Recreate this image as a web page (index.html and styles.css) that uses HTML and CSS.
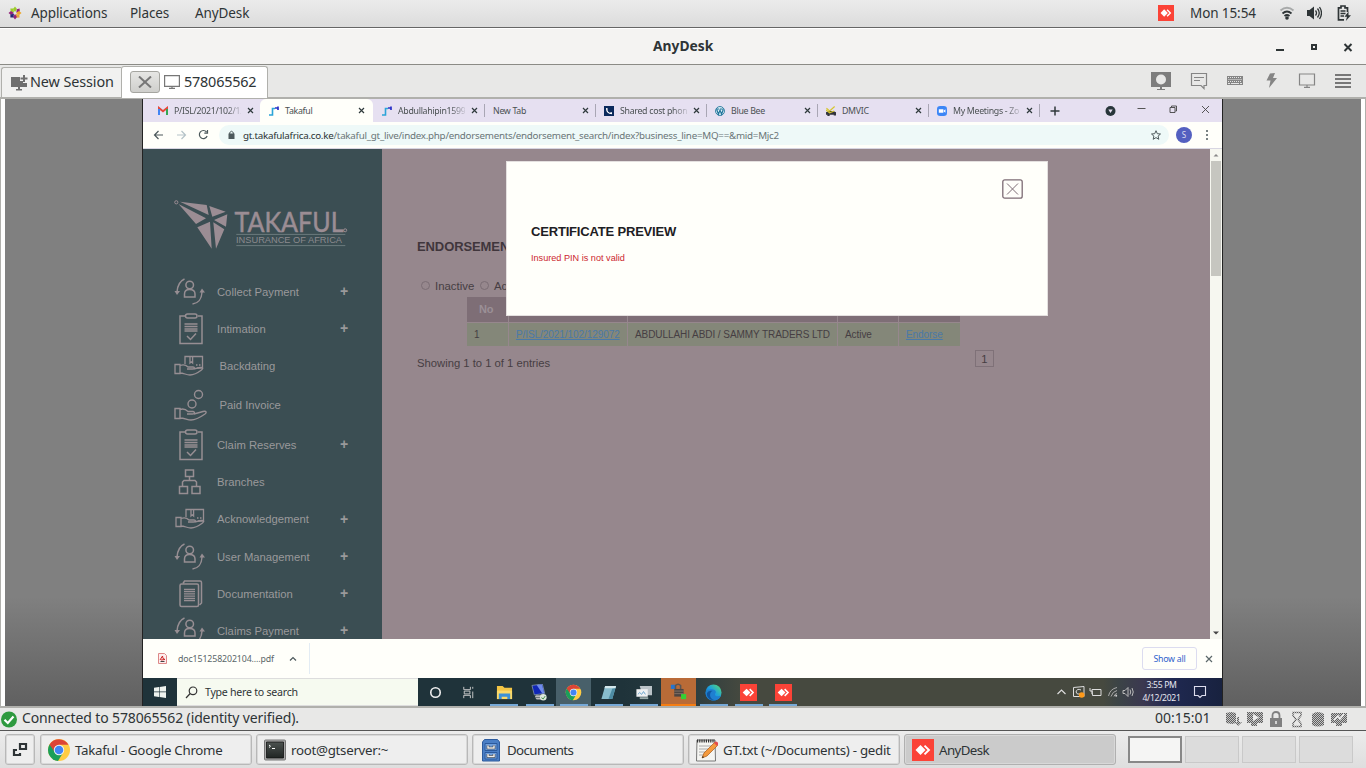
FILE: index.html
```html
<!DOCTYPE html>
<html lang="en">
<head>
<meta charset="utf-8">
<title>AnyDesk</title>
<link rel="stylesheet" href="styles.css">
</head>
<body>
<svg class="defs" width="0" height="0">
  <defs>
    <pattern id="chk" width="2" height="2" patternUnits="userSpaceOnUse"><rect width="2" height="2" fill="#c4c4c4"/><rect width="1" height="1" fill="#5e5e5e"/><rect x="1" y="1" width="1" height="1" fill="#5e5e5e"/></pattern>
    <linearGradient id="term" x2="0" y2="1"><stop stop-color="#4c5250"/><stop offset="1" stop-color="#202523"/></linearGradient>
    <linearGradient id="edge" x1="0" y1="1" x2="1" y2="0"><stop stop-color="#0c59a4"/><stop offset=".5" stop-color="#1b9de2"/><stop offset="1" stop-color="#5be06a"/></linearGradient>
    <symbol id="anydesk" viewBox="0 0 22 22"><rect width="22" height="22" fill="#fb4337"/><path d="M3.500 11 8.500 6l5 5-5 5z" fill="#fff"/><path d="m12.500 6.600 4.400 4.400-4.400 4.400" fill="none" stroke="#fff" stroke-width="2"/></symbol>
    <symbol id="chrome" viewBox="0 0 24 24"><circle cx="12" cy="12" r="11" fill="#fc4"/><path d="M2.500 6.500A11 11 0 0 0 11 23l5.200-8.500L12 12z" fill="#1a9f5a"/><path d="M2.500 6.500A11 11 0 0 1 21.500 6.700H12L7.500 9.500 7.700 14z" fill="#dd4436"/><circle cx="12" cy="12" r="5.200" fill="#f4f4f4"/><circle cx="12" cy="12" r="4.300" fill="#4285f4"/></symbol>
    <symbol id="step" viewBox="0 0 10 10"><path d="M0 9h3.500V2.500H6" fill="none" stroke="#2ba4d8" stroke-width="1.600"/><path d="M6 2h3V.5M9 2v2" fill="none" stroke="#2a30c8" stroke-width="1.700"/></symbol>
    <symbol id="x" viewBox="0 0 7 7"><path d="m1 1 5 5M6 1 1 6" fill="none" stroke="#2f3a3c" stroke-width="1.200"/></symbol>
    <symbol id="user" viewBox="0 0 36 34"><g fill="none" stroke="#978e93" stroke-width="1.500"><path d="M11.500 4C7 6 4.500 10 4 17M19.500 29c6-1 9-4 9.500-12"/><circle cx="16.700" cy="10" r="3.800"/><path d="M11.500 22v-3c0-3 2-4.500 5-4.500s5.500 1.500 5.500 4.500v3z"/></g><path d="m1.500 16 2.500 4 3-4zm25 1.500 2.500-4 3 4z" fill="#978e93"/></symbol>
    <symbol id="clip" viewBox="0 0 36 34"><g fill="none" stroke="#978e93" stroke-width="1.500"><path d="M12 4H7v27.500h22V4h-4"/><rect x="12.500" y="2" width="11.500" height="4" rx="2"/><path d="m14 24 3.500 3.500L23 21.500"/></g><path d="M11.500 12h13M11.500 14.500h13M11.500 17h13M11.500 19h13" stroke="#978e93" stroke-width="1.400"/></symbol>
    <symbol id="box" viewBox="0 0 36 34"><g fill="none" stroke="#978e93" stroke-width="1.300"><path d="M12 15V7.500h17.500V19H24"/><path d="M17 8v6l1.300-1.200L19.600 14V8M23 16h1.500M26 16h1.500"/><path d="M2 15.500h5v9H2zM7 16.500c4-1.500 6-.5 8 1.500h5c2 0 1.500 2-.5 2h-5.500M20.500 20l6.500-1.500c3-.5 3.500 1 1.500 2.500-4 3-8 5-11.500 5-4 0-6-2-10-2"/></g></symbol>
    <symbol id="coins" viewBox="0 0 36 34"><g fill="none" stroke="#978e93" stroke-width="1.400"><circle cx="25.500" cy="6.500" r="4"/><circle cx="19" cy="16" r="4"/><path d="M2 20.500h5v10H2zM7 21.500c4-1.500 6 0 8 2h5c2 0 2 2.500-.5 2.500H14M21 26l9-2.500c3.500-.8 4 1 2 2.500-5 3.500-10 6-14 6s-6-2-11-2"/></g></symbol>
    <symbol id="tree" viewBox="0 0 36 34"><g fill="none" stroke="#978e93" stroke-width="1.500"><path d="M12.500 5h8v6.500h-8zM6.500 21.500h8v7h-8zM19 21.500h8v7h-8zM16.500 11.500v4M9.500 21.500v-4.500l1.500-1.500h11l1.500 1.500v4.500"/></g></symbol>
    <symbol id="docs" viewBox="0 0 36 34"><g fill="none" stroke="#978e93" stroke-width="1.500"><rect x="7" y="7" width="18.500" height="22.500" rx="1.500"/><path d="m10 6.500 1.500-2.500H27q1.500 0 1.500 1.500V26l-2 2"/></g><path d="M11 12.500h11M11 14.700h11M11 16.900h11M11 19.100h11M11 21.300h11M11 23.500h11" stroke="#978e93" stroke-width="1.300"/></symbol>
  </defs>
</svg>

<header class="gnome">
  <svg width="14" height="14" viewBox="0 0 14 14"><path d="M7 .5 9 3 7 6 5 3z" fill="#9ccd2a"/><path d="m11.600 2.400.2 3.100-3.500 1.200.5-3.400z" fill="#932279"/><path d="M2.400 2.400h3L6 6.300 2.600 5.600z" fill="#9ccd2a"/><path d="m13.500 7-2.500 2-3-2 3-2z" fill="#efa724"/><path d="M.5 7 3 5l3 2-3 2z" fill="#932279"/><path d="m11.600 11.600-3.100.2L7.700 8l3.600.6z" fill="#e8a33a"/><path d="m7 13.500-2-2.500 2-3 2 3z" fill="#932279"/><path d="M2.400 11.600V8.500L6 7.800l-.6 3.700z" fill="#262577"/></svg>
  <span class="t">Applications</span><span class="t">Places</span><span class="t">AnyDesk</span>
  <svg width="16" height="16"><use href="#anydesk"/></svg>
  <span class="t">Mon 15:54</span>
  <svg width="16" height="16" viewBox="0 0 16 16" fill="none"><path d="M1.500 5.500Q8 0 14.500 5.500" stroke="#a8aaaa" stroke-width="2"/><path d="M3.500 8.500Q8 4.500 12.500 8.500M5.500 11Q8 9 10.500 11" stroke="#2e3436" stroke-width="1.800"/><circle cx="8" cy="13" r="1.800" fill="#2e3436"/></svg>
  <svg width="16" height="16" viewBox="0 0 16 16" fill="none"><path d="M1 5h2.500L8 1.500v13L3.500 11H1z" fill="#2e3436"/><path d="M9.500 5.500q2 2.500 0 5M11.500 3.500q3.500 4.500 0 9M13.500 2q4 6 0 12" stroke="#2e3436" stroke-width="1.300"/></svg>
  <svg width="16" height="16" viewBox="0 0 16 16" fill="none"><path d="M8 14.800H2.500V2.800H5V1h4v1.800h2.500V7M4.500 6h5M4.500 8.500h5M4.500 11h3.500" stroke="#2e3436" stroke-width="1.700"/><path d="m12.500 6.500-4 5.200h2.500l-1.200 4.300 5.200-5.800h-2.500z" fill="#2e3436"/></svg>
</header>

<div class="title">
  <b class="t">AnyDesk</b>
  <svg width="90" height="16" viewBox="0 0 90 16"><path d="M9 10h8v2H9z" fill="#2e3436"/><path d="M45 6h4v4h-4z" fill="none" stroke="#2e3436" stroke-width="2"/><path d="m77.500 5 7 7m0-7-7 7" stroke="#2e3436" stroke-width="2"/></svg>
</div>

<nav class="adtabs">
  <div class="newsess">
    <svg width="17" height="16" viewBox="0 0 17 16"><path d="M0 2h9v4h3v2h4v4H0zM5 14h6v1.500H5zM7 12h2v2H7z" fill="#6f6f6f"/><path d="M13 0v7M9.500 3.500h7" stroke="#6f6f6f" stroke-width="2"/></svg>
    <span class="t">New Session</span>
  </div>
  <div class="sess">
    <span class="closebtn"><svg width="14" height="12" viewBox="0 0 14 12"><path d="m1 .5 12 11m0-11L1 11.500" stroke="#777" stroke-width="2"/></svg></span>
    <svg width="16" height="14" viewBox="0 0 16 14"><path d="M.6.600h14.800v10.800H.6zM8 11v2M5 13.300h6" fill="none" stroke="#777" stroke-width="1.200"/></svg>
    <span class="t">578065562</span>
  </div>
  <div class="tools">
    <svg viewBox="0 0 20 18"><path d="M0 0h20v15H0z" fill="#7d7d7d"/><circle cx="10" cy="7.500" r="5" fill="#e8e8e7"/><path d="M9 15h2v2h3v1H6v-1h3z" fill="#7d7d7d"/></svg>
    <svg viewBox="0 0 20 18"><path d="M2.500 1.500h15v12H15v3l-3-3H2.500zM5 5.500h10M5 8.500h6" fill="none" stroke="#858585" stroke-width="1.200"/></svg>
    <svg viewBox="0 0 20 18"><path d="M2 4h16v9H2z" fill="#858585"/><path d="M3 5.500h14M3.500 7.500h13M3 9.500h14" stroke="#e5e5e5" stroke-dasharray="1 1"/><path d="M3 11.500h2m1 0h8m1 0h2" stroke="#e5e5e5"/></svg>
    <svg viewBox="0 0 20 18"><path d="m9 1.500 5-.5-2 5h4L8 16 9.500 8.500h-4z" fill="#858585"/></svg>
    <svg viewBox="0 0 20 18"><path d="M2.500 2h15v11h-15zM10 13v2.500M7 15.300h6" fill="none" stroke="#858585" stroke-width="1.200"/></svg>
    <svg viewBox="0 0 20 18"><path d="M2 3h16M2 7h16M2 11h16M2 15h16" stroke="#777" stroke-width="2"/></svg>
  </div>
</nav>

<main class="remote">
 <div class="screen">
  <div class="ctabs">
    <div class="ct c1"><svg class="fav" viewBox="0 0 10 10"><path d="M1 9V2l4 3.200L9 2v7" fill="none" stroke="#e6473b" stroke-width="2"/><path d="M1 9V3" stroke="#4285f4" stroke-width="2"/><path d="M9 9V3" stroke="#34a853" stroke-width="2"/></svg><span class="t fade">P/ISL/2021/102/12</span><svg class="cx"><use href="#x"/></svg></div>
    <div class="ct active"><svg class="fav"><use href="#step"/></svg><span class="t">Takaful</span><svg class="cx"><use href="#x"/></svg></div>
    <div class="ct"><svg class="fav"><use href="#step"/></svg><span class="t fade">Abdullahipin1599</span><svg class="cx"><use href="#x"/></svg></div>
    <div class="ct nofav sep"><span class="t">New Tab</span><svg class="cx"><use href="#x"/></svg></div>
    <div class="ct sep"><svg class="fav" viewBox="0 0 11 11"><path d="M0 0h11v11H0z" fill="#0b2a5c"/><path d="M3 2.300Q2.500 8 8.700 8.300" fill="none" stroke="#fff" stroke-width="1.300"/><path d="M2.300 2.500h1.500v1.700H2.500zM7 7h1.800v1.700H7z" fill="#fff"/></svg><span class="t fade">Shared cost phon</span><svg class="cx"><use href="#x"/></svg></div>
    <div class="ct sep"><svg class="fav" viewBox="0 0 11 11"><circle cx="5.500" cy="5.500" r="4.900" fill="#dff0f6" stroke="#21759b"/><path d="m1.800 3.500 2 5.500 1.700-4.500L7.200 9l2-5.500M1.500 3.300h3m1 0h3" fill="none" stroke="#21759b" stroke-width="1.300"/></svg><span class="t">Blue Bee</span><svg class="cx"><use href="#x"/></svg></div>
    <div class="ct sep"><svg class="fav" viewBox="0 0 11 11"><path d="m0 7 3-1.500h5L11 7v3.500H8.500V9.500H4V11H1.500V9.500H0z" fill="#33343c"/><path d="m.5 2.500 3.500 3 5.500-5M0 4.500l4 3 5-2" fill="none" stroke="#d6c62e" stroke-width="1.300"/></svg><span class="t">DMVIC</span><svg class="cx"><use href="#x"/></svg></div>
    <div class="ct sep"><svg class="fav" viewBox="0 0 11 11"><rect width="11" height="11" rx="3.500" fill="#3c86f6"/><path d="M2 3.500h5v4H2zM7.500 5 9.300 3.700v3.600L7.500 6z" fill="#fff"/></svg><span class="t fade">My Meetings - Zo</span><svg class="cx"><use href="#x"/></svg></div>
    <div class="ctail sep"><svg width="180" height="23" viewBox="-4.500 0 180 23"><path d="M7 12h9M11.500 7.500v9" stroke="#30393b" stroke-width="1.500"/><circle cx="67" cy="12" r="5" fill="#28363a"/><path d="M64.800 10.500h4.400L67 14z" fill="#e6e0f0"/><path d="M94 9.500h8" stroke="#555"/><path d="M126.500 8.500h5v5h-5zM128 8V7h5v5h-1" fill="none" stroke="#444" stroke-width=".9"/><path d="m158.500 7 7 7m0-7-7 7" stroke="#444" stroke-width=".9"/></svg></div>
  </div>
  <div class="bar">
    <svg width="76" height="24" viewBox="0 0 76 24" fill="none"><path d="M20 12h-8.500m4-4-4 4 4 4" stroke="#4c585b" stroke-width="1.200"/><path d="M34 12h8.500m-4-4 4 4-4 4" stroke="#b5c3c8" stroke-width="1.200"/><path d="M63.500 9a4 4 0 1 0 .6 4M64.500 7v3.200h-3.200" stroke="#4c585b" stroke-width="1.200"/></svg>
    <div class="url"><svg width="24" height="20" viewBox="0 0 24 20"><path d="M9.500 8.500h6V14h-6z" fill="#4d595c"/><path d="M10.700 9V7.500q1.800-2.500 3.600 0V9" fill="none" stroke="#4d595c"/></svg><span class="t"><em>gt.takafulafrica.co.ke</em>/takaful_gt_live/index.php/endorsements/endorsement_search/index?business_line=MQ==&amp;mid=Mjc2</span>
    <svg width="10" height="10" viewBox="0 0 10 10"><path d="m5 .7 1.300 3 3.200.3-2.400 2.100.7 3.200L5 7.600 2.200 9.300l.7-3.200L.5 4l3.200-.3z" fill="none" stroke="#4c585b"/></svg></div>
    <span class="avatar">S</span>
    <svg width="4" height="14" viewBox="0 0 4 14" fill="#4c585b"><circle cx="2" cy="3" r="1"/><circle cx="2" cy="7" r="1"/><circle cx="2" cy="11" r="1"/></svg>
  </div>
  <div class="page">
    <aside class="side">
      <svg class="logo" width="180" height="56" viewBox="0 0 180 56">
        <g fill="#9b8d94"><path d="m7 4.700 26.700 3.300 2 10zM5.500 7 33 21.300 23 27zM36.300 9l16.400 5.700-13.400 5zM54.300 17.300l-1.300 12.400L41 23zM24.300 30.300 37 24.700l1.700 27zM40.300 25.300l11 7L43 51.700z"/><circle cx="3.300" cy="5.300" r="1.600" fill="none" stroke="#9b8d94"/><circle cx="172.200" cy="33.300" r="1.500" fill="none" stroke="#9b8d94"/></g>
        <path d="M63.300 37.400h109M63.300 48.600h109" stroke="#718082" stroke-width=".9"/>
        <text class="lt" x="61.500" y="34.600" textLength="109" lengthAdjust="spacingAndGlyphs">TAKAFUL</text>
        <text class="ls" x="63" y="46" textLength="106" lengthAdjust="spacingAndGlyphs">INSURANCE OF AFRICA</text>
      </svg>
      <div class="mi h37"><svg><use href="#user"/></svg><span class="t">Collect Payment</span><i>+</i></div>
      <div class="mi h37"><svg><use href="#clip"/></svg><span class="t">Intimation</span><i>+</i></div>
      <div class="mi h38 in"><svg><use href="#box"/></svg><span class="t">Backdating</span></div>
      <div class="mi h40 in"><svg><use href="#coins"/></svg><span class="t">Paid Invoice</span></div>
      <div class="mi h39"><svg><use href="#clip"/></svg><span class="t">Claim Reserves</span><i>+</i></div>
      <div class="mi h36"><svg><use href="#tree"/></svg><span class="t">Branches</span></div>
      <div class="mi h38 ack"><svg><use href="#box"/></svg><span class="t">Acknowledgement</span><i>+</i></div>
      <div class="mi h37"><svg><use href="#user"/></svg><span class="t">User Management</span><i>+</i></div>
      <div class="mi h37"><svg><use href="#docs"/></svg><span class="t">Documentation</span><i>+</i></div>
      <div class="mi h37"><svg><use href="#user"/></svg><span class="t">Claims Payment</span><i>+</i></div>
    </aside>
    <section class="content">
      <h2 class="t">ENDORSEMENTS</h2>
      <div class="radios"><span class="r"></span><span class="t">Inactive</span><span class="r"></span><span class="t">Active</span></div>
      <div class="table">
        <b class="t">No</b><b></b><b></b><b></b><b></b>
        <span class="t">1</span><a class="t">P/ISL/2021/102/129072</a><span class="t">ABDULLAHI ABDI / SAMMY TRADERS LTD</span><span class="t">Active</span><a class="t">Endorse</a>
      </div>
      <div class="foot"><span class="t">Showing 1 to 1 of 1 entries</span><span class="pg">1</span></div>
    </section>
    <div class="scroll"><svg width="12" height="12" viewBox="0 0 12 12"><path d="M3.500 7.500 6 5l2.500 2.500z" fill="#888"/></svg><div class="thumb"></div><svg width="12" height="12" viewBox="0 0 12 12"><path d="M3 4.500h6L6 7.500z" fill="#444"/></svg></div>
    <div class="modal">
      <svg width="21" height="20" viewBox="0 0 21 20"><rect x=".8" y=".8" width="19.400" height="18.400" rx="2" fill="none" stroke="#7d6c74" stroke-width="1.300"/><path d="m5 4.500 11 11m0-11-11 11" stroke="#7d6c74"/></svg>
      <h3 class="t">CERTIFICATE PREVIEW</h3>
      <p class="t">Insured PIN is not valid</p>
    </div>
  </div>
  <div class="dl">
    <div class="file"><svg width="9" height="11" viewBox="0 0 9 11"><path d="M.5.500h6l2 2v8h-8z" fill="#fdeeee" stroke="#d88"/><path d="m2 7 2.500-4 .5 2.500 2 1L3 7" fill="none" stroke="#c22"/><path d="M2.500 8.500h4" stroke="#444"/></svg><span class="t">doc151258202104....pdf</span><svg width="8" height="6" viewBox="0 0 8 6"><path d="m1 4.500 3-3 3 3" fill="none" stroke="#4c585b" stroke-width="1.200"/></svg></div>
    <span class="showall"><span class="t">Show all</span></span>
    <svg width="8" height="8" viewBox="0 0 8 8"><path d="m1 1 6 6M7 1 1 7" stroke="#5c686a" stroke-width="1.200"/></svg>
  </div>
  <div class="win">
    <span class="start"><svg width="12" height="12" viewBox="0 0 12 12"><path d="M0 1.800 5 1v4.600H0zM5.600.900 12 0v5.600H5.600zM0 6.300h5V11l-5-.8zM5.600 6.300H12V12l-6.400-.9z" fill="#eef2ee"/></svg></span>
    <span class="search"><svg width="13" height="13" viewBox="0 0 13 13"><circle cx="8" cy="4.800" r="3.800" fill="none" stroke="#333" stroke-width="1.200"/><path d="M5.200 7.500 1 12" stroke="#333" stroke-width="1.200"/></svg><span class="t">Type here to search</span></span>
    <div class="apps">
      <span><svg viewBox="0 0 18 18"><circle cx="9" cy="9" r="5" fill="none" stroke="#eee" stroke-width="1.700"/></svg></span>
      <span><svg viewBox="0 0 18 18"><path d="M4 3v3h7V3M4 15v-3h7v3M4.500 7.500h6v3h-6zM13.500 3v2m0 3v7" fill="none" stroke="#ccc"/></svg></span>
      <span class="run"><svg viewBox="0 0 18 18"><path d="M1 2h6l2 2h8v12H1z" fill="#f3c545"/><path d="M1 7h16v9H1z" fill="#fbd968"/><path d="M3 10h12v6h-3v-2.500H6V16H3z" fill="#3d91d6"/></svg></span>
      <span class="run"><svg viewBox="0 0 18 18"><path d="m1 1.500 11-1.500 2.500 10-11 1.500z" fill="#1027b5" stroke="#9ab" stroke-width=".7"/><path d="m6 1 6 9 2-.5L11.500.500z" fill="#6f8ceb"/><path d="M5 12h7v2H4zM4.500 14.500h8v2H6z" fill="#bbb"/><circle cx="13" cy="14" r="3.500" fill="#dde8dd"/><path d="m11 14.500 2 1.300 2-3" fill="none" stroke="#3d8a45"/></svg></span>
      <span class="run on"><svg><use href="#chrome"/></svg></span>
      <span class="run"><svg viewBox="0 0 18 18"><path d="M5.500 2H17l-4 14H1.500z" fill="#87bccd"/><path d="M5.500 2H17l-.6 2.500H4.700z" fill="#d4e8ec"/><path d="m13 5 3.300-.5L13 16l-4-.5z" fill="#4d8ca4"/></svg></span>
      <span class="run"><svg viewBox="0 0 18 18"><path d="M5 2h13v10H8z" fill="#bac3c8"/><path d="M1.500 5.500h12v8h-12z" fill="#eef1f3"/><path d="m3 11 2-2 2 2 2-3 2 3" fill="none" stroke="#67a3cb"/><path d="M5 14h9v2H5z" fill="#9aa"/></svg></span>
      <span class="hot"><svg viewBox="0 0 20 20"><path d="M1 2h6v5H1z" fill="#2575d0"/><path d="M6.500 7V3q3-3 6 0v4" fill="none" stroke="#5c5551" stroke-width="1.800"/><path d="M5 7h11v9H5z" fill="#4d4541"/><path d="M5 9.500h11M5 12.500h11" stroke="#897568"/><path d="M13 13h6v6h-6z" fill="#35d035"/></svg></span>
      <span class="run"><svg viewBox="0 0 18 18"><circle cx="9" cy="9" r="8.500" fill="url(#edge)"/><path d="M.6 10C1 5 11 4 11.500 8.500c0 1.200-1 1.500-1 2.500 0 2.500 4.500 2.300 6.200.8-1 3.500-4 5.700-7.700 5.700-4.500 0-8-3-8.400-7.500z" fill="#1f7fd0"/><path d="M6 9c-2 4 1 8.500 6 7.900-5 1.500-10-2-10-6 0-3 4-4 6-3.500Q6.800 7.800 6 9z" fill="#0f55a0"/></svg></span>
      <span class="run"><svg><use href="#anydesk"/></svg></span>
      <span class="run"><svg><use href="#anydesk"/></svg></span>
    </div>
    <svg class="tray" width="84" height="28" viewBox="0 0 84 28" fill="none"><path d="m4.500 16 4-4 4 4" stroke="#ddd" stroke-width="1.200"/><path d="M20.500 9.500 31 8.500v10H20.500zM28 12q-4-2-5 2 1 3 4 2" stroke="#ddd"/><circle cx="28.700" cy="17" r="2.800" fill="#ff9a1a"/><path d="M39 11.500h9v6h-8.500zM37 10v3h2v3" stroke="#ddd"/><path d="M55.500 18q1.500-7 8.500-8.500M58 18.500q1.500-5 6-6M61 18.500q.5-2.500 3-3" stroke="#aaa"/><circle cx="63.200" cy="17.700" r="1" fill="#ccc"/><path d="M70 12.500h2l3-3v9l-3-3h-2zM77 11.500q1.500 2.500 0 5M79 10q2.500 4 0 8" stroke="#bbb"/></svg>
    <div class="clock"><span class="t">3:55 PM</span><span class="t">4/12/2021</span></div>
    <svg class="note" width="14" height="14" viewBox="0 0 14 14"><path d="M1.500 1.500h11v9H9L7 12.500l-2-2H1.500z" fill="none" stroke="#dde" stroke-width="1.100"/></svg>
  </div>
 </div>
</main>

<footer class="status">
  <svg width="17" height="17" viewBox="0 0 17 17"><circle cx="9" cy="8.500" r="8" fill="#2e9a3f"/><path d="m4.500 8.800 3.300 3.200 5.700-6.500" fill="none" stroke="#fff" stroke-width="2.200"/></svg>
  <span class="t">Connected to 578065562 (identity verified).</span>
  <span class="t">00:15:01</span>
  <svg width="126" height="18" viewBox="0 0 126 18"><path d="M1 3 6 2l5 1v10l-4 1-6-1zM12 7h2v5h3l-4 4-3-4h2z" fill="url(#chk)"/><path d="M22 2h16v11h-6v3h-6v-3h-4z" fill="url(#chk)"/><path d="m28 4 6 3.500L28 11z" fill="#eee"/><path d="M47.500 9V5.500q0-3.500 3.500-3.500t3.500 3.500V9" fill="none" stroke="#808080" stroke-width="1.800"/><path d="M45 8h12v9H45z" fill="#808080"/><path d="M51 11v3" stroke="#eee" stroke-width="1.500"/><path d="M68 2.500h8v3l-3 4 3 4v3h-8v-3l3-4-3-4z" fill="none" stroke="url(#chk)" stroke-width="1.500"/><path d="M87 4q6-4 12 0v11q-6 3-12 0z" fill="url(#chk)"/><path d="M106 3h16v10h-5v3h-6v-3h-5z" fill="url(#chk)"/><path d="m109 10 4-4 2 3 4-5" fill="none" stroke="#eee" stroke-width="1.600"/></svg>
</footer>
<footer class="panel">
  <span class="task show"><svg width="16" height="16" viewBox="0 0 16 16"><path d="M8 2h6v5H8zM5 8H2v5h6v-2" fill="none" stroke="#2e3436" stroke-width="2.200"/></svg></span>
  <span class="task"><svg width="24" height="24"><use href="#chrome"/></svg><span class="t">Takaful - Google Chrome</span></span>
  <span class="task"><svg width="24" height="24" viewBox="0 0 24 24"><rect x="1.500" y="2" width="21" height="20" rx="1" fill="#aaa" stroke="#777"/><path d="M3.500 4h17v16h-17z" fill="url(#term)" stroke="#111" stroke-width=".8"/><path d="m6 7 1.500 1.200L6 9.500M9 10.500h3" fill="none" stroke="#fff"/></svg><span class="t">root@gtserver:~</span></span>
  <span class="task"><svg width="24" height="24" viewBox="0 0 24 24"><path d="m3.500 4 2-2.500h13l2 2.500v19h-17z" fill="#4a7fc6" stroke="#2c5a9c"/><path d="M6 5.500h12v7H6zM6 14.500h12v6.500H6z" fill="#6f9fdd" stroke="#2c5a9c"/><path d="M9 7.500v2.500h6V7.500M9 16v2.500h6V16" fill="none" stroke="#333" stroke-width="2.600"/><path d="M9 7.500v2.500h6V7.500M9 16v2.500h6V16" fill="none" stroke="#eee" stroke-width="1.500"/></svg><span class="t tight">Documents</span></span>
  <span class="task"><svg width="24" height="24" viewBox="0 0 24 24"><path d="M2 2h18l.5 21H1.500z" fill="#f5f5f2" stroke="#777"/><path d="M2 3h18" stroke="#333" stroke-width="3" stroke-dasharray="1.200 1"/><path d="M4 8h13M4 11h12M4 14h8M4 17h5" stroke="#aaa"/><path d="m7 20 2-5L19.500 4.500l3 3L12 18z" fill="#f49a3d" stroke="#a65a1a" stroke-width=".7"/><path d="m19 5 1.500-1.500q3 0 2.500 3L22 8z" fill="#e34b4b"/><path d="m7 20 .8-2 1.200 1.200z" fill="#222"/></svg><span class="t">GT.txt (~/Documents) - gedit</span></span>
  <span class="task cur"><svg width="22" height="22"><use href="#anydesk"/></svg><span class="t tight">AnyDesk</span></span>
  <span class="ws"><i class="sel"></i><i></i><i></i><i></i></span>
</footer>
</body>
</html>
```
FILE: styles.css
```css
* { box-sizing: border-box; }
body { margin: 0; width: 1366px; height: 768px; overflow: hidden; font-family: "Noto Sans", "Open Sans", sans-serif; font-size: 14px; color: #2e3436; display: flex; flex-direction: column; }
svg { display: block; flex: none; }
.defs { position: absolute; }
.t { white-space: nowrap; }

.gnome { height: 28px; flex: none; display: grid; grid-template-columns: 31px 99px 65px 963px 32px 89px 27px 30px 30px; align-items: center; background: linear-gradient(#ebebeb, #dcdcdc); border-bottom: 1px solid #666; font-size: 13.5px; letter-spacing: -.1px; line-height: 18px; padding-bottom: 1px; }
.gnome svg:first-child { margin-left: 8px; }
.title { height: 37px; flex: none; display: grid; grid-template-columns: 1fr auto; align-items: center; background: #f4f3f2; border-top: 1px solid #fff; border-bottom: 1px solid #8b8b86; }
.title b { padding: 0 0 2px 653px; font-size: 13.8px; }
.title svg { margin-right: 9px; }

.adtabs { height: 33px; flex: none; display: flex; align-items: flex-end; background: #e8e8e7; border-bottom: 1px solid #b0b0ac; }
.newsess { width: 120px; height: 30px; margin-left: 1px; display: flex; align-items: center; background: #f1f1f0; border: 1px solid #b0b0ac; border-bottom: 0; border-right: 0; border-radius: 3px 0 0; padding-left: 9px; font-size: 14.4px; letter-spacing: -.1px; }
.newsess svg { margin-right: 2px; }
.newsess .t, .sess .t { padding-bottom: 2px; }
.sess { width: 147px; height: 32px; margin-bottom: -1px; display: flex; align-items: center; background: #fff; border: 1px solid #b0b0ac; border-bottom: 0; border-radius: 3px 3px 0 0; padding: 0 0 1px 8px; font-size: 14.4px; letter-spacing: -.2px; }
.closebtn { width: 30px; height: 22px; margin-right: 4px; border: 1px solid #a5a5a0; border-radius: 3px; background: linear-gradient(#e6e6e4, #cfcfcc); display: flex; align-items: center; justify-content: center; }
.sess .t { margin-left: 4px; }
.tools { margin-left: auto; padding: 0 13px 7px 0; display: flex; gap: 16px; }
.tools svg { width: 20px; height: 18px; }
.tools svg:first-child { margin-right: 2px; }

.remote { height: 609px; flex: none; background: linear-gradient(#808080 82%, #606060); border: 5px solid #fff; border-width: 1px 5px; display: flex; outline: 1px solid #b0b0ac; outline-offset: -1px; padding: 0 138px 0 137px; }
.screen { width: 1081px; height: 607px; border: 1px solid #222; border-width: 0 1px; display: flex; flex-direction: column; background: #fffffa; }

.ctabs { height: 23px; flex: none; display: flex; background: #e6e0f1; font-size: 8.8px; letter-spacing: -.3px; color: #4a5052; }
.ct { width: 111px; height: 23px; display: grid; grid-template-columns: 10px 67px 7px; column-gap: 6px; align-items: center; padding-left: 9px; }
.ct.c1 { width: 117px; padding-left: 15px; }
.ct.active { width: 113px; background: #fffffa; border-radius: 6px 6px 0 0; }
.ct.nofav { grid-template-columns: 83px 7px; }
.ct.sep, .ctail.sep { background: linear-gradient(#a9a6b4, #a9a6b4) 0 5px / 1px 13px no-repeat; }
.fav { width: 10px; height: 10px; }
.cx { width: 7px; height: 7px; }
.ct .t { line-height: 14px; }
.fade { -webkit-mask-image: linear-gradient(90deg, #000 78%, transparent 105%); mask-image: linear-gradient(90deg, #000 78%, transparent 105%); }
.bar { height: 27px; flex: none; display: flex; align-items: center; background: #fffffa; border-bottom: 1px solid #d8d6e2; }
.url { width: 950px; height: 20px; border-radius: 10px; background: #eef9f8; display: flex; align-items: center; font-size: 9.8px; letter-spacing: -.26px; color: #6a7577; }
.url em { font-style: normal; color: #2b3335; }
.url .t { width: 908px; }
.avatar { width: 16px; height: 16px; margin-left: 7px; border-radius: 50%; background: #5460c0; color: #dde; font-size: 8px; line-height: 16px; text-align: center; }
.bar > svg:last-child { margin-left: 13px; }

.page { height: 490px; flex: none; position: relative; display: flex; overflow: hidden; font-family: "Liberation Sans", Arial, sans-serif; }
.side { width: 239px; background: #3b4e53; color: #9a999b; font-size: 11.25px; }
.logo { margin: 48px 0 20px 30px; }
.lt { font: 27px Lato, sans-serif; fill: #9b8d94; stroke: #9b8d94; stroke-width: .5px; }
.ls { font: 9px "Liberation Sans", sans-serif; fill: #8b8a8e; }
.mi { display: grid; grid-template-columns: 44px 123px 20px; align-items: center; padding-left: 30px; }
.mi svg { width: 36px; height: 34px; }
.mi i { font-style: normal; font-size: 14px; font-weight: bold; line-height: 16px; padding-bottom: 1px; }
.mi.in .t { padding-left: 2.5px; }
.mi.ack svg { margin-left: 1px; }
.h36 { height: 36px; } .h37 { height: 37px; } .h38 { height: 38px; } .h39 { height: 39px; } .h40 { height: 40px; }
.content { width: 828px; background: #96878d; padding: 90px 0 0 35px; color: #463e43; }
.content h2 { margin: 0; font-size: 13px; letter-spacing: -.1px; line-height: 16px; color: #40363c; }
.radios { display: flex; align-items: center; margin-top: 23px; height: 15px; font-size: 11.4px; }
.r { width: 9px; height: 9px; margin: 0 5px 0 4px; border: 1px solid #7b6d74; border-radius: 50%; }
.radios .t { width: 41px; }
.table { margin: 4px 0 0 50px; display: grid; grid-template-columns: 41px 118px 209px 60px 61px; grid-template-rows: 25px 23px; gap: 1px; font-size: 10px; letter-spacing: -.07px; align-items: stretch; }
.table > * { background: #848779; padding-left: 7px; line-height: 23px; }
.table b { background: #7e6e76; line-height: 25px; font-size: 11px; color: #9b9096; padding-left: 12px; }
.table a { color: #4a79a8; text-decoration: underline; }
.foot { display: flex; margin-top: 4px; font-size: 11.25px; }
.foot .t { width: 558px; line-height: 27px; }
.pg { width: 19px; height: 17px; border: 1px solid #7f7178; text-align: center; line-height: 16px; }
.scroll { width: 12px; background: #f6f7f0; display: flex; flex-direction: column; }
.thumb { height: 115px; margin: 0 1px 351px; background: #c6c6c0; }
.modal { position: absolute; left: 363px; top: 12px; width: 542px; height: 155px; background: #fffffa; border: 1px solid #e4e0df; padding: 17px 24px; color: #1d2023; }
.modal svg { margin-left: auto; }
.modal h3 { margin: 24px 0 0; font-size: 13px; letter-spacing: -.18px; line-height: 17px; }
.modal p { margin: 11px 0 0; font-size: 9.15px; line-height: 14px; color: #cc1f2f; }

.dl { height: 39px; flex: none; display: flex; align-items: center; font-size: 8.8px; letter-spacing: -.12px; }
.file { width: 167px; height: 31px; padding-left: 15px; display: grid; grid-template-columns: 20px 111px 8px; align-items: center; border-right: 1px solid #e3ecf4; color: #5a6668; }
.showall { margin-left: 832px; width: 55px; height: 23px; border: 1px solid #dcdcf0; border-radius: 3px; display: flex; align-items: center; justify-content: center; color: #2f62cc; letter-spacing: -.25px; }
.dl > svg { margin-left: 8px; }
.win { height: 28px; flex: none; display: flex; background: linear-gradient(90deg, #1f333a 0 480px, #263a40 535px, #46493f 600px 960px, #3c4446 975px, #3b3850 1000px, #1f2850 1030px, #18223f); }
.start { width: 34px; display: flex; align-items: center; justify-content: center; }
.search { width: 241px; background: #f6faf0; border-top: 1px solid #ddd; border-bottom: 1px solid #ddd; display: flex; align-items: center; padding-left: 8px; font-size: 10.6px; letter-spacing: -.25px; }
.search .t { margin-left: 7px; padding-bottom: 1px; }
.apps { display: grid; grid-template-columns: 34px 33px 38px 33px 35px 35px 35px 35px 35px 35px 34px; }
.apps span { display: flex; align-items: center; justify-content: center; }
.apps svg { width: 17px; height: 17px; }
.run { background: linear-gradient(#76a9d8, #76a9d8) 50% 100% / 28px 2px no-repeat; }
.on { background-color: #48606a; }
.hot { background: #b96b37; border-bottom: 2px solid #f57d13; }
.tray { margin-left: 253px; }
.clock { margin-left: -2.5px; width: 54px; display: flex; flex-direction: column; align-items: center; justify-content: center; font-size: 8.6px; letter-spacing: -.3px; line-height: 13px; color: #e8e8f0; }
.note { margin: 7px 0 0 4px; }

.status { height: 24px; flex: none; display: grid; grid-template-columns: 22px 1133px 70px auto; align-items: center; background: #e8e8e7; border-top: 1px solid #b0b0ac; border-bottom: 1px solid #555; font-size: 14px; letter-spacing: -.12px; line-height: 18px; }
.status .t { padding-bottom: 2px; }
.status .t:nth-child(3) { letter-spacing: 0; }
.panel { height: 37px; flex: none; display: flex; padding: 3px 0 0 5px; background: linear-gradient(#ececec, #dedede); font-size: 13.3px; letter-spacing: -.28px; }
.task { width: 212px; height: 31px; margin-right: 4px; border: 1px solid #b8b8b8; border-radius: 3px; background: #eee; display: flex; align-items: center; padding-left: 6px; box-shadow: inset 0 0 0 1px #d8d8d8; }
.task .t { margin-left: 4px; }
.task .tight { letter-spacing: -.6px; }
.show { width: 30px; margin-right: 5px; }
.cur { background: #cbcbcb; border-color: #b0b0b0; padding-left: 7px; }
.cur .t { margin-left: 5px; }
.ws { display: flex; gap: 3px; margin: 2px 0 0 8px; height: 27px; }
.ws i { width: 54px; border: 1px solid #c9c9c9; background: #dcdcdc; }
.ws .sel { background: #f5f5f4; border: 2px solid #888; }
```
